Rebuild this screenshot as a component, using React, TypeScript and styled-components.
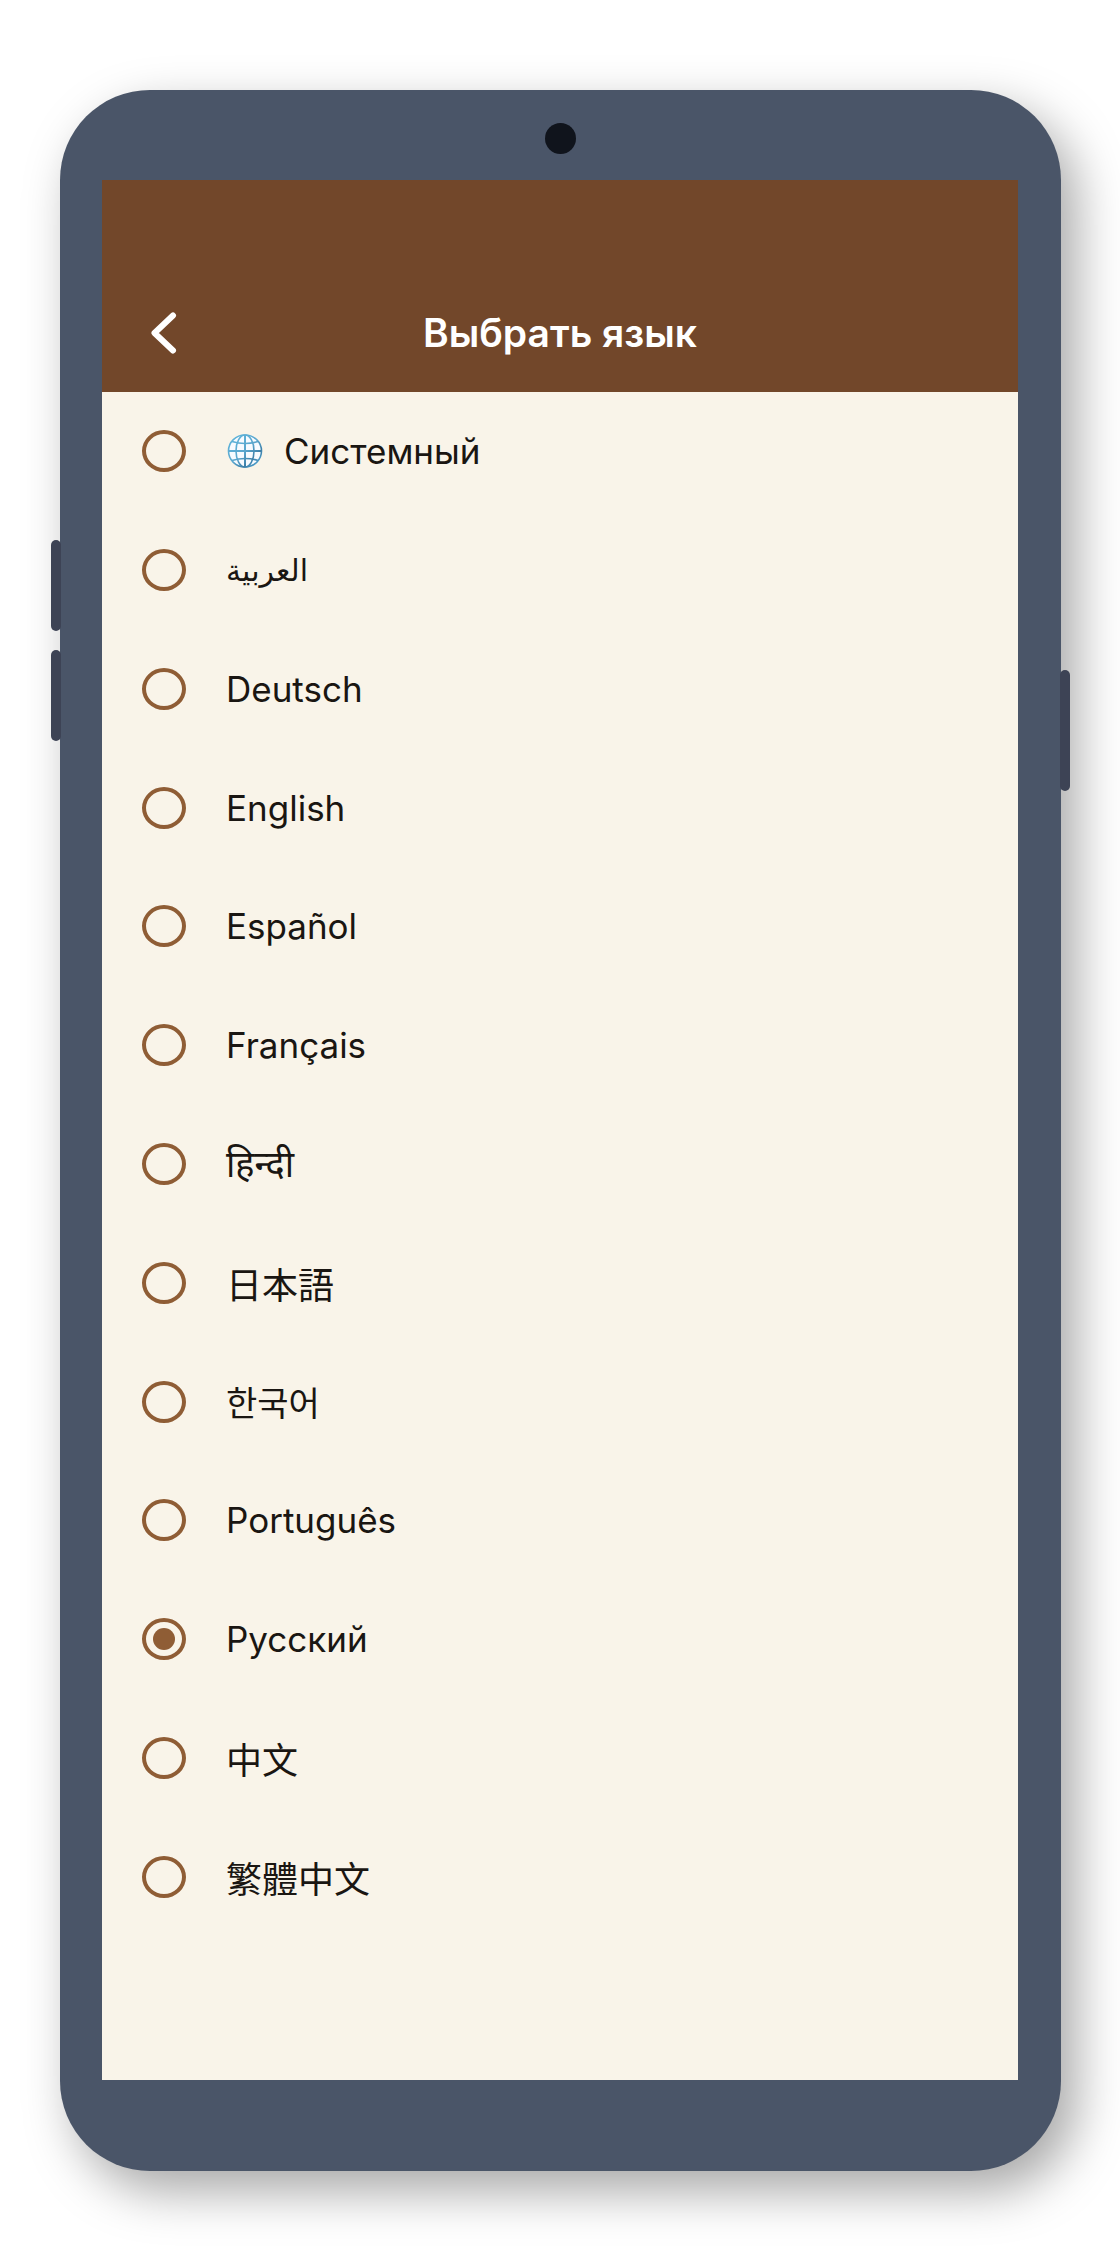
import React, { useState } from "react";
import styled, { createGlobalStyle } from "styled-components";

const GlobalStyle = createGlobalStyle`
  * {
    box-sizing: border-box;
  }
  body {
    margin: 0;
    background: #ffffff;
  }
`;

const Page = styled.div`
  display: flex;
  min-height: 100vh;
  padding: 90px 59px 89px 60px;
  overflow: hidden;
  font-family: Inter, "Noto Sans", "DejaVu Sans", "Noto Sans CJK JP", sans-serif;
`;

const Phone = styled.div`
  position: relative;
  display: flex;
  flex: 1;
  flex-direction: column;
  padding: 0 43px 91px 42px;
  border-radius: 90px;
  background: #4a5568;
  box-shadow: 15px 20px 50px rgba(0, 0, 0, 0.35);
`;

const SideKey = styled.span<{ $side: "left" | "right"; $top: number; $size: number }>`
  position: absolute;
  ${({ $side }) => $side}: -9px;
  top: ${({ $top }) => $top}px;
  width: 10px;
  height: ${({ $size }) => $size}px;
  border-radius: 5px;
  background: #3d4355;
`;

const Bezel = styled.div`
  display: flex;
  align-items: center;
  justify-content: center;
  height: 90px;
  padding-top: 7px;
`;

const Camera = styled.span`
  width: 31px;
  height: 31px;
  border-radius: 50%;
  background: #10141c;
`;

const Screen = styled.main`
  display: flex;
  flex: 1;
  flex-direction: column;
  background: #f9f4e9;
`;

const Header = styled.header`
  display: grid;
  grid-template-columns: 84px 1fr 84px;
  align-items: center;
  height: 212px;
  padding: 94px 20px 0;
  background: #72472a;
`;

const BackButton = styled.button`
  display: flex;
  align-items: center;
  justify-content: center;
  height: 84px;
  padding: 0;
  border: 0;
  background: none;
  cursor: pointer;
`;

const Title = styled.h1`
  margin: 0;
  color: #ffffff;
  font-size: 39px;
  font-weight: 600;
  line-height: 48px;
  text-align: center;
`;

const Languages = styled.form`
  display: grid;
  flex: 1;
  grid-auto-rows: 1fr;
  padding-bottom: 144px;
`;

const Option = styled.label`
  display: flex;
  align-items: center;
  gap: 40px;
  padding: 0 40px;
  cursor: pointer;
`;

const Radio = styled.input`
  display: grid;
  flex: none;
  place-items: center;
  appearance: none;
  width: 44px;
  height: 42px;
  margin: 0;
  border: 4px solid #8f5d35;
  border-radius: 50%;

  &:checked::before {
    content: "";
    width: 22px;
    height: 22px;
    border-radius: 50%;
    background: #8f5d35;
  }
`;

const Name = styled.span`
  display: flex;
  align-items: center;
  gap: 20px;
  color: #1a1612;
  font-size: 35px;
  line-height: 44px;

  &:lang(ar) {
    font-size: 30px;
  }
  &:lang(hi) {
    font-size: 36px;
  }
  &:lang(ja) {
    font-family: "Noto Sans CJK JP", sans-serif;
    font-size: 36px;
  }
  &:lang(ko) {
    font-family: "Noto Sans CJK KR", sans-serif;
    font-size: 34px;
  }
  &:lang(zh-Hans) {
    font-family: "Noto Sans CJK SC", sans-serif;
    font-size: 36px;
  }
  &:lang(zh-Hant) {
    font-family: "Noto Sans CJK TC", sans-serif;
    font-size: 36px;
  }
`;

const languages = [
  { code: "system", name: "Системный" },
  { code: "ar", name: "العربية" },
  { code: "de", name: "Deutsch" },
  { code: "en", name: "English" },
  { code: "es", name: "Español" },
  { code: "fr", name: "Français" },
  { code: "hi", name: "हिन्दी" },
  { code: "ja", name: "日本語" },
  { code: "ko", name: "한국어" },
  { code: "pt", name: "Português" },
  { code: "ru", name: "Русский" },
  { code: "zh-Hans", name: "中文" },
  { code: "zh-Hant", name: "繁體中文" },
];

function ChevronLeft() {
  return (
    <svg width="26" height="42" viewBox="0 0 26 42" fill="none" aria-hidden="true">
      <path
        d="M22 3.5 3.5 21 22 38.5"
        stroke="#ffffff"
        strokeWidth="6"
        strokeLinecap="round"
        strokeLinejoin="round"
      />
    </svg>
  );
}

function Globe() {
  return (
    <svg width="38" height="36" viewBox="0 0 38 36" fill="none" aria-hidden="true">
      <defs>
        <linearGradient id="globeLine" x1="4" y1="2" x2="34" y2="34" gradientUnits="userSpaceOnUse">
          <stop offset="0" stopColor="#5fb6dc" />
          <stop offset="0.5" stopColor="#5ba6cd" />
          <stop offset="0.75" stopColor="#3d7fa8" />
          <stop offset="1" stopColor="#58b4e4" />
        </linearGradient>
      </defs>
      <ellipse cx="19" cy="18" rx="16.5" ry="16" fill="#f8fbff" />
      <g stroke="url(#globeLine)" strokeWidth="1.6">
        <ellipse cx="19" cy="18" rx="16.5" ry="16" />
        <ellipse cx="19" cy="18" rx="9" ry="16" />
        <path d="M19.01 2 19 34M2.5 18 35.5 18.01" strokeWidth="2" />
        <path d="M6 8.5C14 11 24 11 32 8.5M6 27.5C14 25 24 25 32 27.5" />
      </g>
    </svg>
  );
}

export default function App() {
  const [selected, setSelected] = useState("ru");

  return (
    <Page>
      <GlobalStyle />
      <Phone>
        <SideKey $side="left" $top={450} $size={91} />
        <SideKey $side="left" $top={560} $size={91} />
        <SideKey $side="right" $top={580} $size={121} />
        <Bezel>
          <Camera />
        </Bezel>
        <Screen>
          <Header>
            <BackButton type="button" aria-label="Назад">
              <ChevronLeft />
            </BackButton>
            <Title>Выбрать язык</Title>
          </Header>
          <Languages>
            {languages.map(({ code, name }) => (
              <Option key={code}>
                <Radio
                  type="radio"
                  name="language"
                  value={code}
                  checked={selected === code}
                  onChange={() => setSelected(code)}
                />
                <Name lang={code === "system" ? "ru" : code}>
                  {code === "system" && <Globe />}
                  {name}
                </Name>
              </Option>
            ))}
          </Languages>
        </Screen>
      </Phone>
    </Page>
  );
}
